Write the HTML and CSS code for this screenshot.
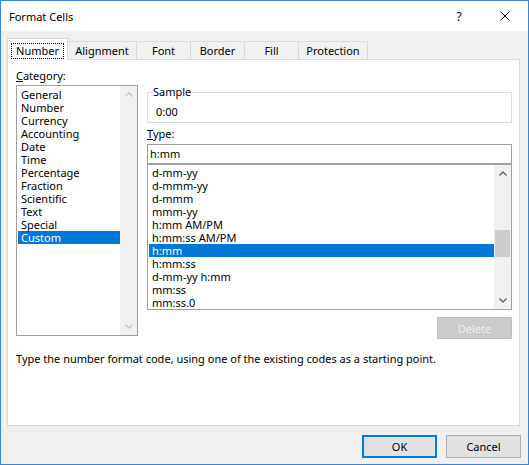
FILE: index.html
```html
<!DOCTYPE html>
<html>
<head>
<meta charset="utf-8">
<title>Format Cells</title>
<link rel="stylesheet" href="styles.css">
</head>
<body>
<div class="window">
  <div class="titlebar">
    <span class="title">Format Cells</span>
    <span class="caption-btn help">?</span>
    <span class="caption-btn close"><svg width="10" height="10" viewBox="0 0 10 10"><path d="M0.5 0.5 L9.5 9.5 M9.5 0.5 L0.5 9.5" stroke="#000" stroke-width="1" fill="none"/></svg></span>
  </div>
  <div class="client">
    <div class="tabs">
      <div class="tab active w-number"><span class="focus">Number</span></div>
      <div class="tab w-alignment">Alignment</div>
      <div class="tab w-font">Font</div>
      <div class="tab w-border">Border</div>
      <div class="tab w-fill">Fill</div>
      <div class="tab w-protection">Protection</div>
    </div>
    <div class="panel">
      <div class="columns">
        <div class="col-left">
          <div class="label"><u>C</u>ategory:</div>
          <div class="listbox category">
            <div class="items">
              <div class="item">General</div>
              <div class="item">Number</div>
              <div class="item">Currency</div>
              <div class="item">Accounting</div>
              <div class="item">Date</div>
              <div class="item">Time</div>
              <div class="item">Percentage</div>
              <div class="item">Fraction</div>
              <div class="item">Scientific</div>
              <div class="item">Text</div>
              <div class="item">Special</div>
              <div class="item selected">Custom</div>
            </div>
            <div class="scrollbar disabled">
              <div class="sb-arrow"><svg width="8" height="5" viewBox="0 0 8 5"><path d="M0.5 4.5 L4 1 L7.5 4.5" fill="none" stroke-width="1.3"/></svg></div>
              <div class="sb-track"></div>
              <div class="sb-arrow"><svg width="8" height="5" viewBox="0 0 8 5"><path d="M0.5 0.5 L4 4 L7.5 0.5" fill="none" stroke-width="1.3"/></svg></div>
            </div>
          </div>
        </div>
        <div class="col-right">
          <fieldset class="sample">
            <legend>Sample</legend>
            <div class="sample-value">0:00</div>
          </fieldset>
          <div class="label type-label"><u>T</u>ype:</div>
          <div class="input">h:mm</div>
          <div class="listbox types">
            <div class="items">
              <div class="item">d-mm-yy</div>
              <div class="item">d-mmm-yy</div>
              <div class="item">d-mmm</div>
              <div class="item">mmm-yy</div>
              <div class="item">h:mm AM/PM</div>
              <div class="item">h:mm:ss AM/PM</div>
              <div class="item selected">h:mm</div>
              <div class="item">h:mm:ss</div>
              <div class="item">d-mm-yy h:mm</div>
              <div class="item">mm:ss</div>
              <div class="item">mm:ss.0</div>
            </div>
            <div class="scrollbar">
              <div class="sb-arrow"><svg width="8" height="5" viewBox="0 0 8 5"><path d="M0.5 4.5 L4 1 L7.5 4.5" fill="none" stroke-width="1.3"/></svg></div>
              <div class="sb-track"><div class="thumb"></div></div>
              <div class="sb-arrow"><svg width="8" height="5" viewBox="0 0 8 5"><path d="M0.5 0.5 L4 4 L7.5 0.5" fill="none" stroke-width="1.3"/></svg></div>
            </div>
          </div>
          <div class="delete-row"><button class="btn btn-delete" disabled>Delete</button></div>
        </div>
      </div>
      <p class="desc">Type the number format code, using one of the existing codes as a starting point.</p>
    </div>
    <div class="footer">
      <button class="btn btn-ok">OK</button>
      <button class="btn btn-cancel">Cancel</button>
    </div>
  </div>
</div>
</body>
</html>
```

FILE: styles.css
```css
* { box-sizing: border-box; }
html, body { margin: 0; padding: 0; }
body {
  width: 529px;
  height: 465px;
  overflow: hidden;
  background: #fff;
  font-family: "Noto Sans", "Open Sans", sans-serif;
  font-size: 11px;
  color: #000;
}
.window {
  width: 529px;
  height: 465px;
  border: 1px solid #3a86d6;
  display: flex;
  flex-direction: column;
}
.titlebar {
  height: 30px;
  flex: none;
  background: #fff;
  display: flex;
  align-items: center;
}
.title { flex: 1; padding-left: 8px; padding-top: 1px; }
.caption-btn {
  width: 46px;
  height: 30px;
  display: flex;
  align-items: center;
  justify-content: center;
}
.help { font-size: 12px; }
.close svg { display: block; }
.client {
  flex: 1;
  background: #f0f0f0;
  padding: 7px 8px 0 6px;
  display: flex;
  flex-direction: column;
}
.tabs {
  display: flex;
  align-items: flex-end;
  height: 21px;
  flex: none;
}
.tab {
  height: 18px;
  border: 1px solid #d9d9d9;
  border-bottom: none;
  margin-right: -1px;
  background: #f0f0f0;
  text-align: center;
  line-height: 16px;
  padding-top: 1px;
  white-space: nowrap;
}
.tab.active {
  height: 22px;
  margin-bottom: -1px;
  background: #fff;
  position: relative;
  z-index: 1;
  padding: 4px 3px 0;
}
.focus {
  display: block;
  height: 16px;
  line-height: 14px;
  border: 1px dotted #000;
}
.w-number { width: 61px; }
.w-alignment { width: 70px; }
.w-font, .w-border, .w-fill { width: 55px; }
.w-protection { width: 70px; }
.panel {
  height: 367px;
  flex: none;
  background: #fff;
  border: 1px solid #d9d9d9;
  padding: 8px 7px 0 8px;
}
.columns { display: flex; gap: 9px; }
.col-left { width: 122px; flex: none; }
.col-right { width: 365px; flex: none; }
.label { height: 16px; line-height: 16px; margin-bottom: 1px; }
.listbox {
  border: 1px solid #a0a0a0;
  display: flex;
  background: #fff;
}
.items { flex: 1; overflow: hidden; padding-left: 1px; }
.category { height: 251px; }
.category .items { padding-top: 2px; }
.types { height: 146px; }
.types .items { padding-top: 1px; }
.item {
  height: 13px;
  line-height: 13px;
  padding-left: 3px;
  white-space: nowrap;
}
.item.selected { background: #0078d7; color: #fff; }
.scrollbar {
  width: 17px;
  flex: none;
  background: #f0f0f0;
  display: flex;
  flex-direction: column;
}
.sb-arrow {
  height: 17px;
  flex: none;
  display: flex;
  align-items: center;
  justify-content: center;
}
.sb-arrow svg { display: block; stroke: #606060; }
.scrollbar.disabled .sb-arrow svg { stroke: #c4c4c4; }
.sb-track { flex: 1; }
.thumb {
  margin: 48px 1px 0;
  height: 27px;
  background: #cdcdcd;
}
.sample {
  margin: 16px 0 0;
  padding: 4px 8px 2px;
  border: 1px solid #dcdcdc;
  min-width: 0;
}
.sample legend {
  padding: 0 1px;
  margin-left: -4px;
  line-height: 16px;
}
.sample-value { line-height: 16px; height: 16px; }
.type-label { margin-top: 3px; margin-bottom: 2px; }
.input {
  height: 20px;
  border: 1px solid #a0a0a0;
  padding: 0 2px;
  line-height: 18px;
}
.delete-row {
  display: flex;
  justify-content: flex-end;
  margin-top: 7px;
}
.btn {
  font: inherit;
  width: 75px;
  margin: 0;
  padding: 0;
  color: #000;
  background: #e1e1e1;
  border: 1px solid #adadad;
}
.btn-delete {
  height: 22px;
  background: #cccccc;
  border-color: #bfbfbf;
  color: #ececec;
}
.desc { margin: 12px 0 0; line-height: 16px; }
.footer {
  display: flex;
  justify-content: flex-end;
  gap: 9px;
  margin-top: 9px;
  margin-right: -1px;
}
.btn-ok, .btn-cancel { height: 23px; }
.btn-ok { border: 2px solid #0078d7; }
```
